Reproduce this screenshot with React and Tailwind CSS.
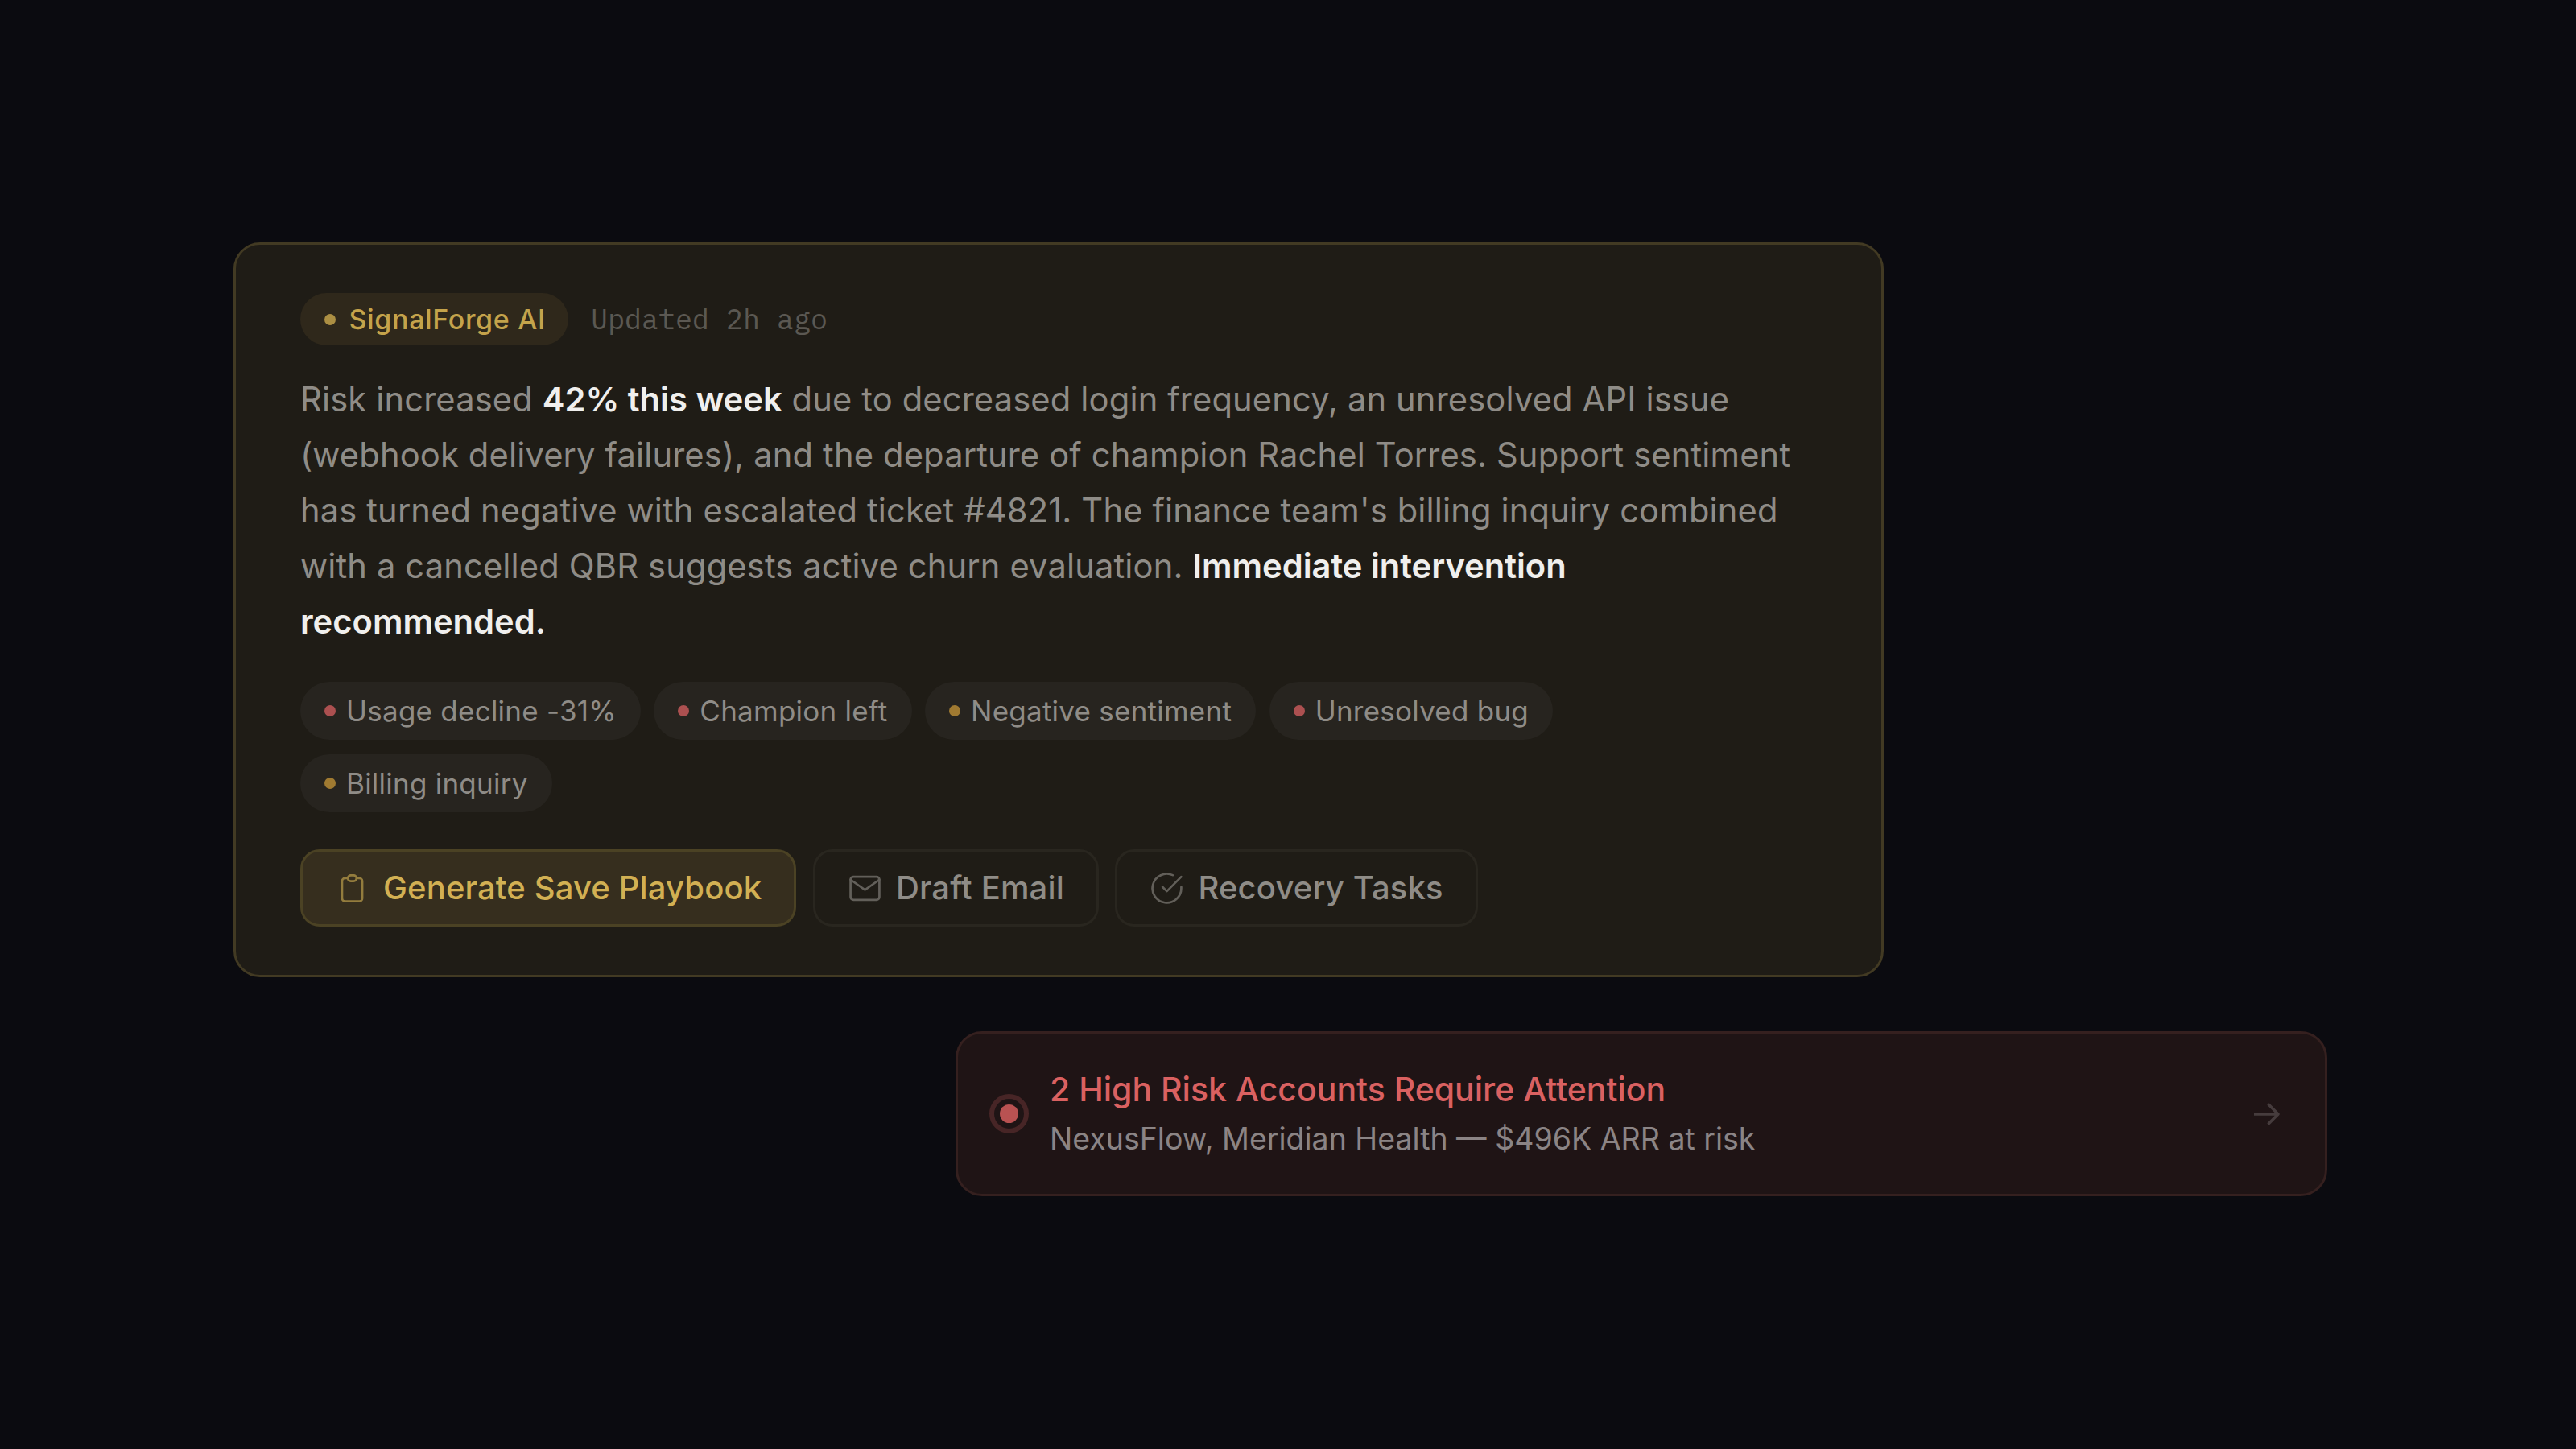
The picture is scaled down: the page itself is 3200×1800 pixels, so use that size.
import React from 'react';

const signals = [
    { label: 'Usage decline -31%', dot: 'bg-[#ac5050]' },
    { label: 'Champion left', dot: 'bg-[#ac5050]' },
    { label: 'Negative sentiment', dot: 'bg-[#a07a31]' },
    { label: 'Unresolved bug', dot: 'bg-[#ac5050]' },
    { label: 'Billing inquiry', dot: 'bg-[#a07a31]' },
];

const Icon = ({ children }) => (
    <svg viewBox="0 0 24 24" className="w-[43px] h-[43px] shrink-0 opacity-60" fill="none" stroke="currentColor" strokeWidth="1.5" strokeLinecap="round" strokeLinejoin="round">
        {children}
    </svg>
);

const ClipboardIcon = () => (
    <Icon><path d="M9 5H7a2 2 0 0 0-2 2v12a2 2 0 0 0 2 2h10a2 2 0 0 0 2-2V7a2 2 0 0 0-2-2h-2M9 5a2 2 0 0 0 2 2h2a2 2 0 0 0 2-2M9 5a2 2 0 0 1 2-2h2a2 2 0 0 1 2 2" /></Icon>
);

const MailIcon = () => (
    <Icon>
        <path d="M4 4h16c1.1 0 2 .9 2 2v12c0 1.1-.9 2-2 2H4c-1.1 0-2-.9-2-2V6c0-1.1.9-2 2-2z" />
        <polyline points="22,6 12,13 2,6" />
    </Icon>
);

const CheckIcon = () => (
    <Icon>
        <path d="M22 11.08V12a10 10 0 1 1-5.93-9.14" />
        <polyline points="22 4 12 14.01 9 11.01" />
    </Icon>
);

const actions = [
    { label: 'Generate Save Playbook', icon: ClipboardIcon, style: 'border-[#4b4224] bg-[#362e1e] text-[#d2b053]' },
    { label: 'Draft Email', icon: MailIcon, style: 'border-[#29261f] text-[#8f8c87]' },
    { label: 'Recovery Tasks', icon: CheckIcon, style: 'border-[#29261f] text-[#8f8c87]' },
];

const InsightCard = () => (
    <section className="w-[2050px] h-[913px] rounded-[33px] border-3 border-[#423a23] bg-[#1f1c16] px-[80px] pt-[60px]">
        <div className="flex items-center gap-[28px]">
            <div className="flex items-center gap-[16.5px] h-[65px] w-[333px] pl-[30px] rounded-full bg-[#2f281b] text-[#c4a34b] text-[34px] tracking-[0.65px] font-medium whitespace-nowrap">
                <span className="w-[14px] h-[14px] rounded-full bg-[#ac8f43]" />
                <span>SignalForge AI</span>
            </div>
            <span className="font-['IBM_Plex_Mono','Liberation_Mono',monospace] text-[35px] text-[#5b5852]">Updated 2h ago</span>
        </div>
        <p className="mt-[33px] w-[1884px] text-[41.67px] leading-[68.9px] tracking-[0.15px] text-[#8f8c87]">
            Risk increased <strong className="font-semibold tracking-normal text-[#f0efed]">42% this week</strong> due to decreased login frequency, an unresolved API issue
            (webhook delivery failures), and the departure of champion Rachel Torres. Support sentiment
            has turned negative with escalated ticket #4821. The finance team's billing inquiry combined
            with a cancelled QBR suggests active churn evaluation. <strong className="font-semibold tracking-normal text-[#f0efed]">Immediate intervention recommended.</strong>
        </p>
        <div className="mt-[40px] w-[1700px] flex flex-wrap gap-x-[16.5px] gap-y-[17.5px]">
            {signals.map(signal => (
                <span key={signal.label} className="flex items-center gap-[13px] h-[72.5px] px-[30px] rounded-full bg-[#27241f] text-[35px] tracking-[0.24px] text-[#8f8c87]">
                    <span className={`w-[14px] h-[14px] rounded-full ${signal.dot}`} />
                    {signal.label}
                </span>
            ))}
        </div>
        <div className="mt-[46px] flex gap-[20.5px]">
            {actions.map(({ label, icon: ActionIcon, style }) => (
                <button key={label} className={`flex items-center gap-[17px] h-[96px] px-[40px] rounded-[24px] border-3 text-[40px] tracking-[0.15px] font-medium ${style}`}>
                    <ActionIcon />
                    {label}
                </button>
            ))}
        </div>
    </section>
);

const RiskAlert = () => (
    <section className="mt-[67px] ml-[897px] w-[1704px] h-[205px] flex items-center rounded-[33px] border-3 border-[#35201f] bg-[#1f1415] pl-[39px] pr-[51px]">
        <span className="w-[49px] h-[49px] flex items-center justify-center rounded-full border-6 border-[#472526]">
            <span className="w-[23px] h-[23px] rounded-full bg-[#b95252]" />
        </span>
        <div className="ml-[26px] flex-1">
            <p className="text-[41px] leading-[61px] font-medium text-[#da6161]">2 High Risk Accounts Require Attention</p>
            <p className="text-[37.5px] leading-[61px] text-[#8b8485]">NexusFlow, Meridian Health — $496K ARR at risk</p>
        </div>
        <svg viewBox="0 0 40 40" className="w-[40px] h-[40px]" fill="none" stroke="#463c3d" strokeWidth="3.6" strokeLinejoin="round">
            <path d="M3 20H33M20.5 7.5L33 20 20.5 32.5" />
        </svg>
    </section>
);

const App = () => (
    <main className="w-[3200px] h-[1800px] overflow-hidden bg-[#0b0b10] pt-[301px] pl-[290px] font-['Inter',sans-serif]">
        <InsightCard />
        <RiskAlert />
    </main>
);

export default App;
